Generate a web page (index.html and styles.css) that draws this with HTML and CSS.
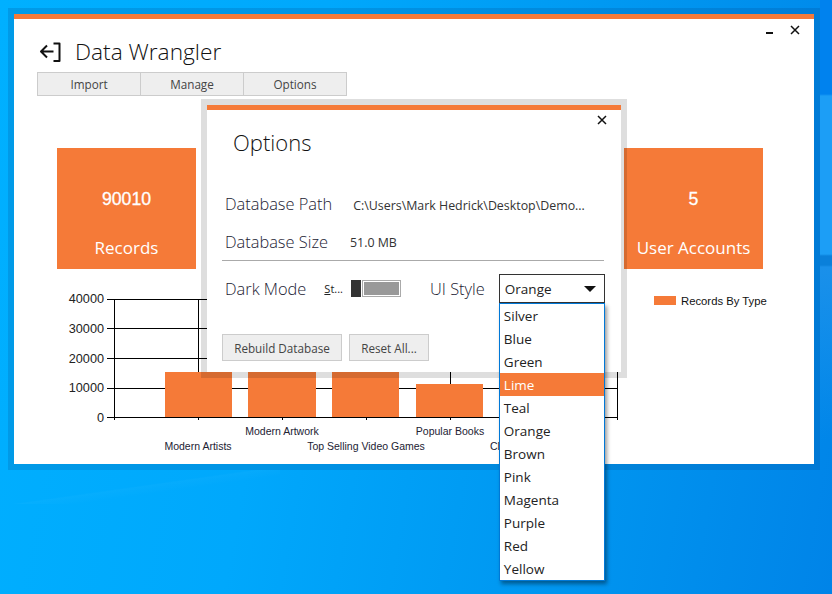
FILE: index.html
```html
<!DOCTYPE html>
<html lang="en">

<head>
  <meta charset="UTF-8">
  <meta name="viewport" content="width=device-width, initial-scale=1.0">
  <title>Data Wrangler</title>
  <link rel="stylesheet" href="styles.css">
</head>

<body>
  <div class="desktop">
    <div class="streak"></div>

    <!-- main window -->
    <section class="window">
      <div class="window-controls">
        <span class="minimize"></span>
        <svg class="close-icon" viewBox="0 0 10 10"><path d="M1 1 9 9M9 1 1 9" /></svg>
      </div>

      <header class="app-header">
        <svg class="back-icon" viewBox="0 0 24 24">
          <path d="M15.500 4.500h6v17.500h-6" />
          <path d="M15.500 12.500H3M9 6.500l-6 6 6 6" />
        </svg>
        <h1>Data Wrangler</h1>
      </header>

      <nav class="tabs">
        <a href="#">Import</a>
        <a href="#">Manage</a>
        <a href="#">Options</a>
      </nav>

      <div class="cards">
        <div class="card">
          <strong>90010</strong>
          <span>Records</span>
        </div>
        <div class="card">
          <strong>5</strong>
          <span>User Accounts</span>
        </div>
      </div>

      <svg class="chart" viewBox="14 285 800 175">
        <g class="grid">
          <path d="M107 299.500H617.500M107 328.500H617.500M107 358.500H617.500M107 388.500H617.500M107 417.500H617.500" />
          <path d="M114.500 299V420M198.500 299V420M282.500 299V420M366.500 299V420M450.500 299V420M534.500 299V420M617.500 299V420" />
        </g>
        <g class="bars">
          <rect x="165" y="372" width="67" height="45" />
          <rect x="248" y="372" width="68" height="45" />
          <rect x="332" y="372" width="67" height="45" />
          <rect x="416" y="384" width="67" height="33" />
          <rect x="500" y="372" width="67" height="45" />
        </g>
        <g class="axis-y">
          <text x="104" y="303">40000</text>
          <text x="104" y="333">30000</text>
          <text x="104" y="363">20000</text>
          <text x="104" y="392">10000</text>
          <text x="104" y="422">0</text>
        </g>
        <g class="axis-x">
          <text x="282" y="435">Modern Artwork</text>
          <text x="450" y="435">Popular Books</text>
          <text x="198" y="450">Modern Artists</text>
          <text x="366" y="450">Top Selling Video Games</text>
          <text x="495" y="450">Cl</text>
        </g>
        <rect class="legend-swatch" x="654" y="296" width="22" height="9" />
        <text class="legend-label" x="681" y="305">Records By Type</text>
      </svg>
    </section>

    <!-- options dialog -->
    <section class="dialog">
      <svg class="close-icon dialog-close" viewBox="0 0 10 10"><path d="M1 1 9 9M9 1 1 9" /></svg>
      <h2>Options</h2>

      <div class="info-row info-path">
        <span class="label">Database Path</span>
        <span class="value">C:\Users\Mark Hedrick\Desktop\Demo...</span>
      </div>
      <div class="info-row info-size">
        <span class="label">Database Size</span>
        <span class="value">51.0 MB</span>
      </div>

      <hr class="divider">

      <div class="settings-row">
        <span class="label">Dark Mode</span>
        <span class="toggle-text"><u>S</u>t...</span>
        <span class="toggle"><i class="thumb"></i><i class="track"></i></span>
        <span class="label ui-style">UI Style</span>

        <div class="select">
          <div class="select-box">
            <span>Orange</span>
            <i class="caret"></i>
          </div>
          <ul class="select-list">
            <li>Silver</li>
            <li>Blue</li>
            <li>Green</li>
            <li class="active">Lime</li>
            <li>Teal</li>
            <li>Orange</li>
            <li>Brown</li>
            <li>Pink</li>
            <li>Magenta</li>
            <li>Purple</li>
            <li>Red</li>
            <li>Yellow</li>
          </ul>
        </div>
      </div>

      <div class="actions">
        <button class="btn btn-rebuild">Rebuild Database</button>
        <button class="btn btn-reset">Reset All...</button>
      </div>
    </section>
  </div>
</body>

</html>
```

FILE: styles.css
```css
/* page */
html,
body {
  margin: 0;
  height: 100%;
}

body {
  font-family: "Open Sans", "Noto Sans", sans-serif;
  overflow: hidden;
}

/* desktop wallpaper */
.desktop {
  position: relative;
  width: 832px;
  height: 594px;
  overflow: hidden;
  background:
    linear-gradient(180deg, #0082ee 0, #0082ee 94px, #1c9ef6 96px, #1c9ef6 254px, #0a80da 256px, #0a80da 265px, #1a90ea 267px, rgba(26, 144, 234, 0) 440px) right top / 12px 594px no-repeat,
    linear-gradient(100deg, #00b0ff 0%, #00a8fc 35%, #0096f0 70%, #0084e8 100%);
}

.streak {
  position: absolute;
  left: 0;
  top: 470px;
  width: 280px;
  height: 34px;
  background: linear-gradient(172deg, rgba(255, 255, 255, 0) 48%, rgba(255, 255, 255, 0.025) 50%, rgba(255, 255, 255, 0) 62%);
}

/* main window */
.window {
  position: absolute;
  left: 14px;
  top: 14px;
  width: 800px;
  height: 450px;
  box-sizing: border-box;
  background-color: #fff;
  border-top: 5px solid #f57a38;
  box-shadow: 0 0 0 6px rgba(0, 50, 110, 0.16);
  overflow: hidden;
}

.window-controls {
  position: absolute;
  top: 6px;
  right: 14px;
  display: flex;
  align-items: flex-start;
  gap: 17px;
}

.minimize {
  width: 7px;
  height: 2px;
  margin-top: 7px;
  background-color: #111;
}

.close-icon {
  display: block;
  width: 10px;
  height: 10px;
  fill: none;
  stroke: #111;
  stroke-width: 1.500;
}

.app-header {
  display: flex;
  align-items: center;
  height: 30px;
  padding: 17px 0 0 24px;
}

.back-icon {
  width: 24px;
  height: 24px;
  fill: none;
  stroke: #111;
  stroke-width: 2;
  stroke-linejoin: round;
}

.app-header h1 {
  margin: 0 0 0 13px;
  font-size: 22.700px;
  font-weight: 300;
  color: #111;
  white-space: nowrap;
}

/* tab bar */
.tabs {
  display: flex;
  width: 310px;
  height: 24px;
  box-sizing: border-box;
  margin: 6px 0 0 23px;
  background-color: #eee;
  border: 1px solid #ccc;
}

.tabs a {
  flex: 1;
  display: flex;
  justify-content: center;
  align-items: center;
  font-size: 11.700px;
  color: #444;
  text-decoration: none;
  border-left: 1px solid #ccc;
}

.tabs a:first-child {
  border-left: 0;
}

/* stat cards */
.cards {
  display: flex;
  justify-content: space-between;
  margin: 52px 51px 0 43px;
}

.card {
  display: flex;
  flex-direction: column;
  align-items: center;
  width: 139px;
  height: 121px;
  background-color: #f57a38;
  color: #fff;
}

.card strong {
  margin-top: 39px;
  font-family: "Liberation Sans", Arial, sans-serif;
  font-size: 17.700px;
  line-height: 24px;
  font-weight: 400;
  -webkit-text-stroke: 0.3px #fff;
}

.card span {
  margin-top: 25px;
  font-size: 17px;
  line-height: 24px;
  font-weight: 400;
  white-space: nowrap;
}

/* chart */
.chart {
  display: block;
  width: 800px;
  height: 175px;
  margin-top: 16px;
  font-family: "Liberation Sans", Arial, sans-serif;
}

.grid path {
  fill: none;
  stroke: #000;
  stroke-width: 1;
  shape-rendering: crispEdges;
}

.bars rect,
.legend-swatch {
  fill: #f57a38;
}

.axis-y text {
  font-size: 12.700px;
  fill: #222;
  text-anchor: end;
}

.axis-x text {
  font-size: 10.500px;
  fill: #223;
  text-anchor: middle;
}

.legend-label {
  font-size: 11.300px;
  fill: #111;
}

/* options dialog */
.dialog {
  position: absolute;
  left: 207px;
  top: 105px;
  width: 414px;
  height: 267px;
  box-sizing: border-box;
  padding-left: 15px;
  background-color: #fff;
  border-top: 5px solid #f57a38;
  box-shadow: 0 0 0 6px rgba(0, 0, 0, 0.13);
}

.dialog-close {
  position: absolute;
  top: 5px;
  right: 14px;
}

.dialog h2 {
  margin: 0;
  padding: 14px 0 0 11px;
  font-size: 22px;
  line-height: 36px;
  font-weight: 300;
  color: #111;
}

.label {
  font-size: 16.400px;
  font-weight: 300;
  color: #223;
  white-space: nowrap;
}

.info-row {
  display: flex;
  align-items: center;
  height: 24px;
  padding-left: 3px;
}

.info-path {
  margin-top: 31px;
}

.info-path .value {
  margin: 5px 0 0 21px;
}

.info-size {
  margin-top: 14px;
}

.info-size .value {
  margin-left: 22px;
}

.value {
  margin-top: 3px;
  font-size: 12.400px;
  color: #333;
  white-space: nowrap;
}

.divider {
  width: 382px;
  margin: 7px 0 0;
  border: 0;
  border-top: 1px solid #aaa;
}

.settings-row {
  display: flex;
  align-items: center;
  height: 29px;
  margin-top: 13px;
  padding-left: 3px;
}

.toggle-text {
  margin-left: 18px;
  font-size: 11px;
  color: #222;
}

.toggle {
  display: flex;
  height: 17px;
  margin-left: 8px;
}

.thumb {
  width: 10px;
  background-color: #333;
}

.track {
  width: 39px;
  box-sizing: border-box;
  margin-left: 1px;
  padding: 1px;
  background: #999 content-box;
  border: 1px solid #aaa;
}

.ui-style {
  margin-left: 29px;
}

/* combo box */
.select {
  position: relative;
  width: 106px;
  margin-left: 14px;
}

.select-box {
  display: flex;
  justify-content: space-between;
  align-items: center;
  height: 29px;
  box-sizing: border-box;
  padding: 0 8px 0 5px;
  font-size: 13.500px;
  color: #222;
  border: 1px solid #333;
}

.caret {
  width: 0;
  height: 0;
  border-left: 6px solid transparent;
  border-right: 6px solid transparent;
  border-top: 6px solid #111;
}

.select-list {
  position: absolute;
  left: 0;
  top: 29px;
  width: 106px;
  box-sizing: border-box;
  margin: 0;
  padding: 0;
  list-style: none;
  background-color: #fff;
  border: 1px solid #0078d7;
  box-shadow: 2px 3px 4px rgba(0, 0, 0, 0.4);
  z-index: 10;
}

.select-list li {
  height: 23px;
  padding-left: 4px;
  font-size: 13.500px;
  line-height: 25px;
  color: #222;
}

.select-list li.active {
  background-color: #f57a38;
  color: #fff;
}

/* dialog buttons */
.actions {
  display: flex;
  gap: 7px;
  margin-top: 31px;
}

.btn {
  height: 27px;
  padding: 0;
  font-family: inherit;
  font-size: 11.700px;
  color: #444;
  background-color: #eee;
  border: 1px solid #ccc;
}

.btn-rebuild {
  width: 120px;
}

.btn-reset {
  width: 80px;
}
```
